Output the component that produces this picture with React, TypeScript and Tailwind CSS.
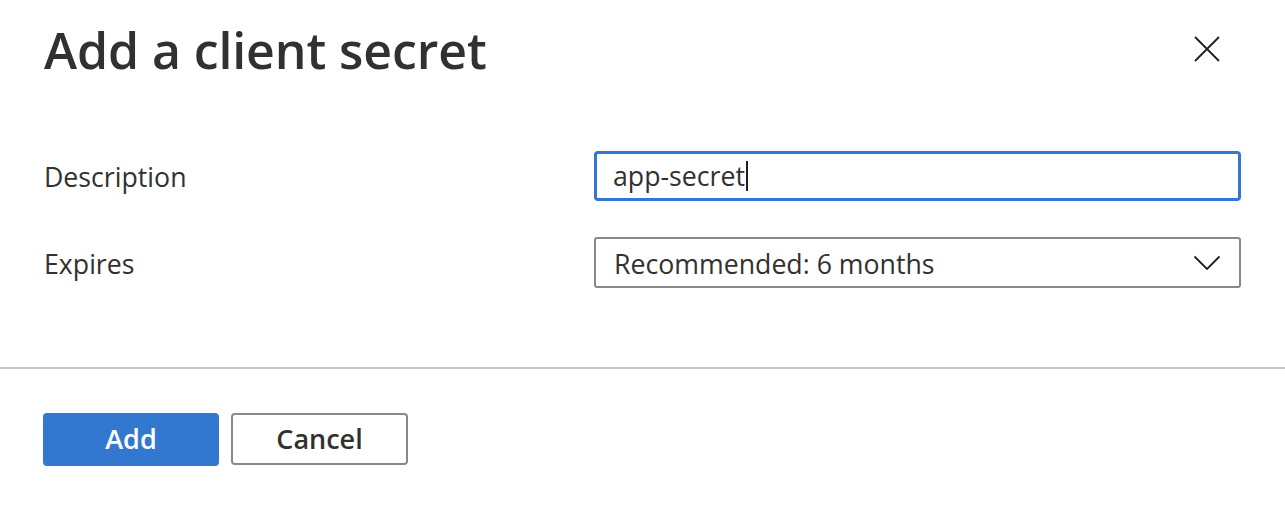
import React from "react";

export default function App() {
  return (
    <div
      className="w-[1285px] h-[520px] bg-white text-[#323130] overflow-hidden"
      style={{ fontFamily: '"Open Sans", "Noto Sans", sans-serif' }}
    >
      <div className="flex items-start justify-between pl-[44px] pr-[44px] pt-[18px] h-[110px]">
        <h1 className="text-[50px] leading-[64px] font-semibold tracking-[-0.1px]">Add a client secret</h1>
        <button className="mt-[18px] mr-[21px] w-[26px] h-[26px] flex items-center justify-center">
          <svg width="26" height="26" viewBox="0 0 26 26">
            <path d="M1 1 L25 25 M25 1 L1 25" stroke="#201f1e" strokeWidth="1.8" fill="none" />
          </svg>
        </button>
      </div>
      <div className="flex flex-col gap-[36px] pl-[44px] pr-[44px] pt-[41px]">
        <div className="flex items-center h-[50px]">
          <div className="w-[550px] text-[26.7px] pt-[2px]">Description</div>
          <div className="flex-1 h-[50px] border-[3px] border-[#3277d0] rounded-[4px] flex items-center pl-[16px] text-[26.7px]">
            <span>app-secret</span>
            <span className="w-[2px] h-[30px] bg-[#201f1e] ml-[1px]"></span>
          </div>
        </div>
        <div className="flex items-center h-[51px]">
          <div className="w-[550px] text-[26.7px] pt-[3px]">Expires</div>
          <div className="flex-1 h-[51px] border-[2px] border-[#8a8886] rounded-[3px] flex items-center justify-between pl-[18px] pr-[18px] text-[26.7px]">
            <span className="pt-[3px]">Recommended: 6 months</span>
            <svg width="28" height="16" viewBox="0 0 28 16">
              <path d="M1.5 1.5 L14 14 L26.5 1.5" stroke="#201f1e" strokeWidth="1.8" fill="none" />
            </svg>
          </div>
        </div>
      </div>
      <div className="mt-[79px] h-[2px] bg-[#c8c6c4]"></div>
      <div className="flex gap-[12px] pl-[43px] pt-[44px]">
        <button className="w-[176px] h-[53px] rounded-[4px] bg-[#3277d0] text-white text-[27px] font-semibold flex items-center justify-center">
          Add
        </button>
        <button className="w-[177px] h-[52px] rounded-[4px] border-[2px] border-[#8a8886] bg-white text-[27px] font-semibold flex items-center justify-center">
          Cancel
        </button>
      </div>
    </div>
  );
}
